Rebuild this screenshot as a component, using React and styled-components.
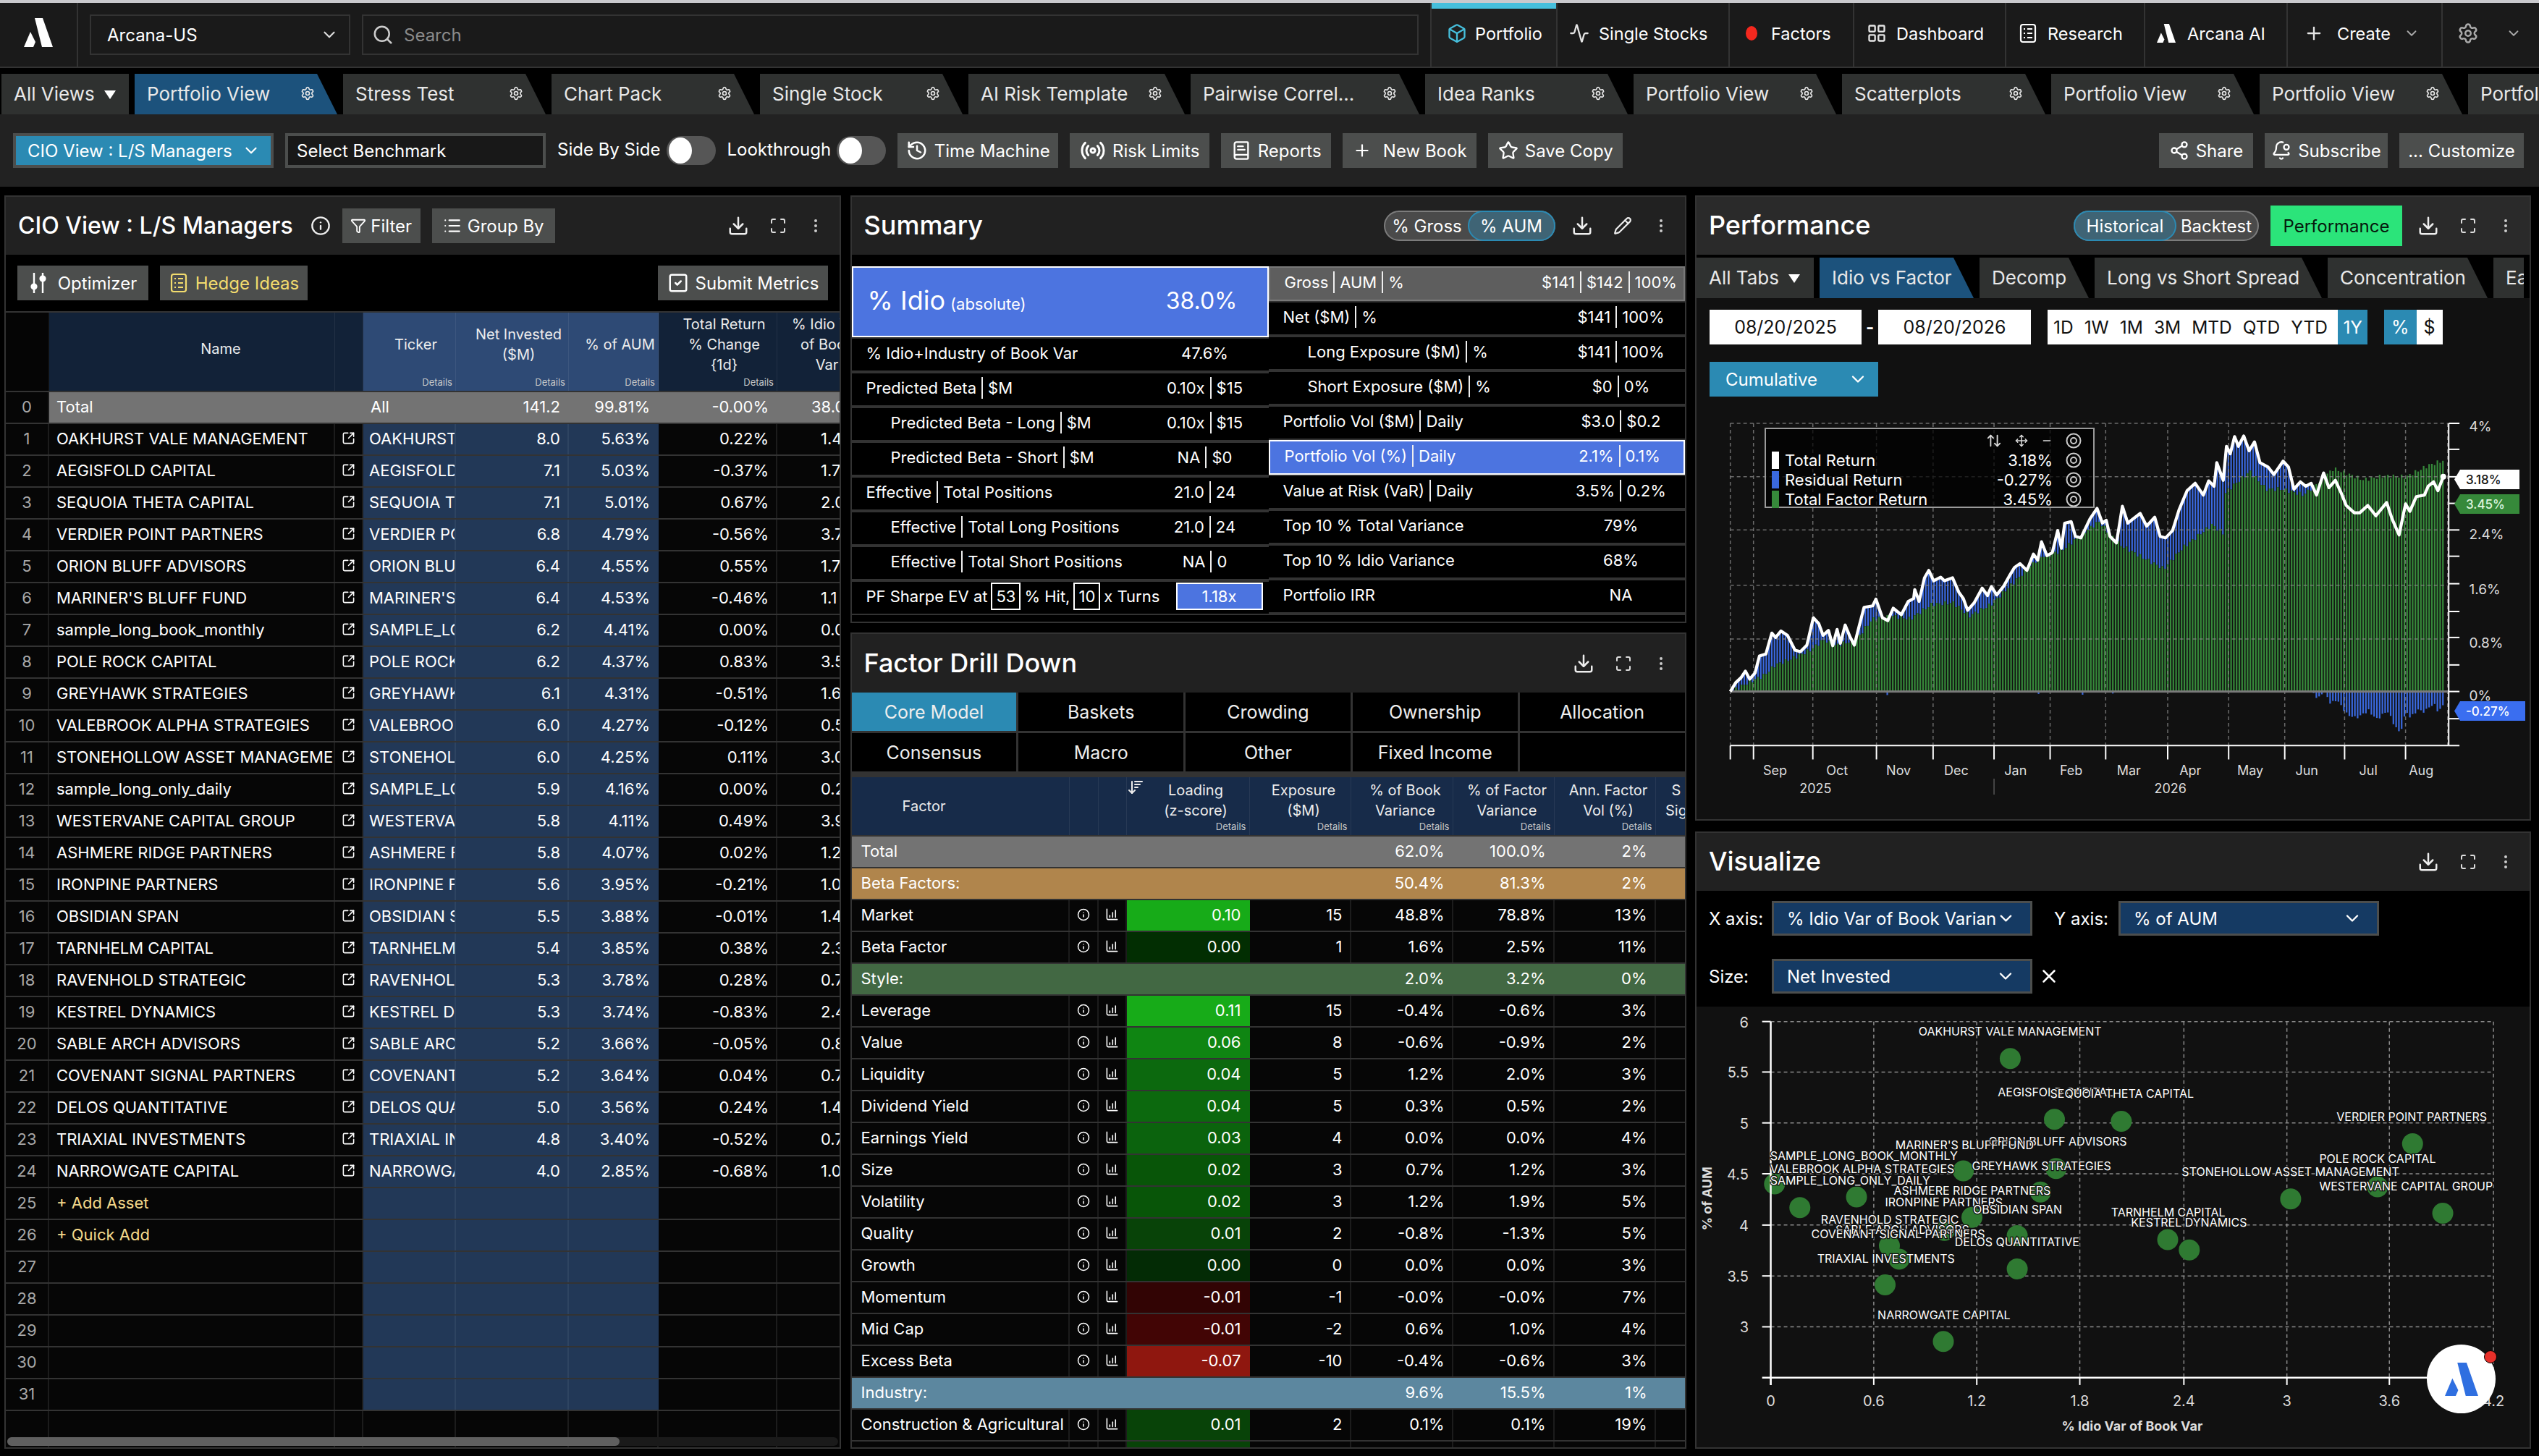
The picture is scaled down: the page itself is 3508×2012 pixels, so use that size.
import React from 'react';
import styled, { createGlobalStyle } from 'styled-components';
import {
  Activity, ArrowDownWideNarrow, ArrowUpDown, BellDot, BookText, Box, ChartColumnIncreasing, ChevronDown,
  Download, EllipsisVertical, Filter, History, Info, LayoutGrid, List, Maximize, Minus, Move,
  Pencil, Plus, Radio, Search, Settings, Share2, SquareArrowOutUpRight,
  SquareCheck, Star, X,
} from 'lucide-react';

const GlobalStyle = createGlobalStyle`
  html, body { margin: 0; padding: 0; background: #000; }
  body { width: 3508px; height: 2012px; overflow: hidden; font-family: Inter, "Noto Sans", sans-serif; color: #fff; }
  * { box-sizing: border-box; }
`;

const Page = styled.div`
  width: 3508px;
  height: 2012px;
  display: flex;
  flex-direction: column;
  background: #000;
  overflow: hidden;
`;

const TopStrip = styled.div`
  height: 4px;
  background: #c9c9cd;
`;

const TopBar = styled.div`
  height: 90px;
  display: flex;
  background: #1a1a1a;
  border-bottom: 2px solid #333;
`;

const LogoCell = styled.div`
  width: 108px;
  display: flex;
  align-items: center;
  justify-content: center;
  border-right: 2px solid #333;
  padding-bottom: 6px;
`;

const TopSelect = styled.div`
  width: 360px;
  height: 56px;
  margin: 16px 0 0 16px;
  padding: 0 14px 0 22px;
  display: flex;
  align-items: center;
  justify-content: space-between;
  border: 2px solid #333;
  font-size: 24px;
`;

const SearchBox = styled.div`
  width: 1460px;
  height: 56px;
  margin: 16px 16px 0 16px;
  padding: 0 12px;
  display: flex;
  align-items: center;
  gap: 14px;
  border: 2px solid #333;
  font-size: 24px;
  color: #8a8a8a;
`;

const NavItem = styled.div`
  width: ${(p) => p.$w}px;
  display: flex;
  align-items: center;
  gap: ${(p) => p.$gap || 13}px;
  padding: 0 0 4px ${(p) => p.$pad}px;
  font-size: 23.5px;
  border-left: 2px solid #333;
  position: relative;
  ${(p) => p.$active && 'background: #1f1f1f; &::before { content: ""; position: absolute; left: 0; right: 0; top: 0; height: 8px; background: #46bfdc; }'}
`;

const RedDot = styled.span`
  width: 16px;
  height: 20px;
  border-radius: 50%;
  background: #f5281e;
`;

const TabStrip = styled.div`
  height: ${(p) => p.$h || 64}px;
  padding: ${(p) => p.$pad || '8px 0 0 2px'};
  display: flex;
  gap: 8px;
  overflow: hidden;
  flex-shrink: 0;
  background: #000;
`;

const TabItem = styled.div`
  flex: 0 0 ${(p) => p.$w}px;
  height: 56px;
  padding: 0 ${(p) => (p.$plain ? 0 : 31)}px 2px 17px;
  display: flex;
  align-items: center;
  justify-content: ${(p) => (p.$plain ? 'flex-start' : 'space-between')};
  font-size: 26px;
  white-space: nowrap;
  overflow: hidden;
  color: #e8e8e8;
  background: ${(p) => (p.$active ? '#1c527c' : '#2f3130')};
  ${(p) => !p.$plain && 'clip-path: polygon(0 0, calc(100% - 28px) 0, 100% 100%, 0 100%);'}
`;

const Caret = styled.span`
  width: 0;
  height: 0;
  margin: 3px 0 0 13px;
  border-left: 8px solid transparent;
  border-right: 8px solid transparent;
  border-top: 12px solid #fff;
`;

const Toolbar = styled.div`
  height: 100px;
  flex-shrink: 0;
  padding: 26px 21px 0 18px;
  display: flex;
  gap: 16px;
  background: #222;
`;

const Spacer = styled.div`
  flex: 1;
`;

const ViewSelect = styled.div`
  width: 360px;
  height: 48px;
  padding: 0 14px 0 16px;
  display: flex;
  align-items: center;
  justify-content: space-between;
  font-size: 24px;
  background: #2b8ab3;
  border: 4px solid #4c4e4d;
`;

const BenchInput = styled.div`
  width: 360px;
  height: 48px;
  padding: 0 12px;
  display: flex;
  align-items: center;
  font-size: 24px;
  background: #181818;
  border: 4px solid #4c4e4d;
`;

const ToggleLabel = styled.div`
  height: 44px;
  display: flex;
  align-items: center;
  font-size: 24px;
`;

const Toggle = styled.div`
  width: 68px;
  height: 40px;
  margin: 4px 0 0 -8px;
  padding: 0 0 0 3px;
  border-radius: 20px;
  background: #565656;
  display: flex;
  align-items: center;
  &::before { content: ""; width: 32px; height: 36px; border-radius: 50%; background: #fff; }
`;

const ToolButton = styled.div`
  width: ${(p) => (p.$w ? `${p.$w}px` : 'auto')};
  height: 48px;
  display: flex;
  align-items: center;
  justify-content: center;
  gap: ${(p) => p.$gap || 9}px;
  font-size: 24px;
  white-space: nowrap;
  flex-shrink: 0;
  color: ${(p) => p.$color || '#fff'};
  background: #4c4e4d;
`;

const Columns = styled.div`
  flex: 1;
  min-height: 0;
  margin-top: 12px;
  padding: 0 11px 10px 6px;
  display: grid;
  grid-template-columns: 1156px 1155px 1155px;
  column-gap: 12.5px;
`;

const Stack = styled.div`
  display: flex;
  flex-direction: column;
  min-height: 0;
`;

const Panel = styled.section`
  display: flex;
  flex-direction: column;
  overflow: hidden;
  border: 2px solid #333;
  background: #000;
  position: relative;
  height: ${(p) => (p.$h ? `${p.$h}px` : 'auto')};
  flex: ${(p) => (p.$h ? '0 0 auto' : '1')};
  margin-top: ${(p) => p.$mt || 0}px;
`;

const PanelHead = styled.header`
  height: ${(p) => p.$h || 80}px;
  flex-shrink: 0;
  padding: 0 21px 0 17px;
  display: flex;
  align-items: center;
  gap: 16px;
  background: ${(p) => p.$bg || '#212121'};
`;

const PanelTitle = styled.h2`
  margin: 0 0 2px;
  font-size: ${(p) => p.$size || 36}px;
  font-weight: 500;
  white-space: nowrap;
`;

const IconGroup = styled.div`
  display: flex;
  align-items: center;
  gap: 28px;
  margin-left: ${(p) => p.$ml || 0}px;
`;

const Pill = styled.div`
  height: 42px;
  display: flex;
  font-size: 24px;
  border-radius: 21px;
  background: #4a4a4a;
  border: 2px solid #7c7c7c;
`;

const PillPart = styled.div`
  width: ${(p) => p.$w}px;
  margin: -2px;
  display: flex;
  align-items: center;
  justify-content: center;
  border-radius: 21px;
  z-index: ${(p) => (p.$on ? 1 : 0)};
  ${(p) => p.$on && 'background: #3f6475; border: 2px solid #2b8ab3;'}
`;

const GreenBtn = styled.div`
  width: 182px;
  height: 56px;
  display: flex;
  align-items: center;
  justify-content: center;
  font-size: 24px;
  color: #06190d;
  background: #2be47a;
`;

const BookActions = styled.div`
  height: 78px;
  flex-shrink: 0;
  padding: 15px 16px 0 16px;
  display: flex;
  gap: 16px;
`;

const Table = styled.div`
  flex: 1;
  min-height: 0;
  overflow: hidden;
  display: flex;
  flex-direction: column;
  border-top: 2px solid #333;
  position: relative;
`;

const bookCols = '60px 395px 39px 128px 156px 124px 164px 138px';
const factorCols = '301px 40px 39px 170px 140px 141px 140px 140px 48px';

const HeadRow = styled.div`
  display: grid;
  grid-template-columns: ${(p) => p.$cols};
  height: ${(p) => p.$h}px;
  flex-shrink: 0;
  border-bottom: 2px solid #333;
`;

const HeadCell = styled.div`
  position: relative;
  overflow: hidden;
  display: flex;
  align-items: center;
  justify-content: center;
  text-align: center;
  white-space: nowrap;
  padding: ${(p) => p.$pad || '0 0 20px 18px'};
  font-size: 20px;
  line-height: 28px;
  color: #ececec;
  background: ${(p) => p.$bg};
  border-right: 1.5px solid rgba(255, 255, 255, 0.07);
`;

const Details = styled.span`
  position: absolute;
  right: 4px;
  bottom: 4px;
  font-size: 13px;
  line-height: 16px;
  color: #c8c8c8;
`;

const SortIcon = styled.span`
  position: absolute;
  left: 0;
  top: 2px;
  display: flex;
`;

const Row = styled.div`
  display: grid;
  grid-template-columns: ${(p) => p.$cols};
  height: 44px;
  flex-shrink: 0;
  font-size: 22px;
  border-bottom: 2px solid #333;
  background: ${(p) => p.$bg || '#060606'};
`;

const Cell = styled.div`
  display: flex;
  align-items: center;
  justify-content: ${(p) => p.$j || 'flex-start'};
  overflow: hidden;
  white-space: nowrap;
  padding: ${(p) => p.$pad || '0 10px'};
  padding-bottom: 3px;
  color: ${(p) => p.$color || 'inherit'};
  background: ${(p) => p.$bg || 'transparent'};
  border-right: 2px solid ${(p) => p.$line || '#1c1c1c'};
`;

const BlankTail = styled.div`
  flex: 1;
  display: grid;
  grid-template-columns: ${bookCols};
  background: #060606;
`;

const TailCell = styled.div`
  border-right: 2px solid #1c1c1c;
`;

const ScrollTrack = styled.div`
  position: absolute;
  left: 2px;
  right: 2px;
  bottom: 2px;
  height: 12px;
  border-radius: 6px;
  background: #1a1a1a;
`;

const ScrollThumb = styled.div`
  width: 846px;
  height: 100%;
  border-radius: 6px;
  background: #5f5f5f;
`;

const SummaryGrid = styled.div`
  margin-top: 16px;
  display: grid;
  grid-template-columns: 576px 1fr;
  background: #333;
  flex-shrink: 0;
`;

const SummaryCol = styled.div`
  display: flex;
  flex-direction: column;
`;

const IdioBox = styled.div`
  height: 98px;
  padding: 0 41px 4px 20px;
  display: flex;
  align-items: center;
  justify-content: space-between;
  font-size: 36px;
  background: #4c74e0;
  border: 2px solid #fff;
`;

const IdioSub = styled.span`
  margin-left: 7px;
  font-size: 22px;
`;

const IdioValue = styled.span`
  font-size: 32px;
`;

const SumRow = styled.div`
  height: 48px;
  padding-left: ${(p) => (p.$indent ? 54 : 20)}px;
  padding-bottom: 4px;
  display: flex;
  align-items: center;
  font-size: 22px;
  white-space: nowrap;
  background: ${(p) => (p.$tone === 'blue' ? '#4c74e0' : p.$tone === 'grey' ? '#5e5e5e' : '#000')};
  border: ${(p) => (p.$tone === 'blue' ? '2px solid #fff' : p.$tone === 'grey' ? '2px solid #787878' : '0')};
  ${(p) => !p.$tone && 'border-top: 2px solid #333; border-bottom: 2px solid #333;'}
`;

const SumLabel = styled.div`
  flex: 1;
  display: flex;
  align-items: center;
  min-width: 0;
`;

const SumValue = styled.div`
  width: ${(p) => p.$w || 176}px;
  margin-right: ${(p) => p.$mr || 0}px;
  display: flex;
  align-items: center;
  justify-content: center;
`;

const Bar = styled.span`
  width: 2px;
  height: 30px;
  margin: 0 7px;
  background: #eee;
`;

const NumBox = styled.span`
  height: 38px;
  padding: 0 5px;
  margin: 0 5px;
  display: inline-flex;
  align-items: center;
  border: 2px solid #fff;
`;

const SharpeValue = styled.div`
  width: 120px;
  height: 38px;
  margin-right: 8px;
  display: flex;
  align-items: center;
  justify-content: center;
  background: #4c74e0;
  border: 2px solid #fff;
`;

const FactorTabs = styled.div`
  display: grid;
  grid-template-columns: repeat(5, 1fr);
  gap: 3px;
  padding-bottom: 8px;
  flex-shrink: 0;
  background: #333;
`;

const FactorTab = styled.div`
  height: 53px;
  display: flex;
  align-items: center;
  justify-content: center;
  font-size: 25px;
  color: #eee;
  background: ${(p) => (p.$active ? '#2b8ab3' : '#000')};
`;

const PerfBody = styled.div`
  flex: 1;
  min-height: 0;
  display: flex;
  flex-direction: column;
  background: #111;
  position: relative;
`;

const DateRow = styled.div`
  padding: 16px 0 0 18px;
  display: flex;
  align-items: center;
  flex-shrink: 0;
`;

const WhiteField = styled.div`
  width: ${(p) => p.$w}px;
  height: 48px;
  margin-left: ${(p) => p.$ml || 0}px;
  display: flex;
  align-items: center;
  justify-content: ${(p) => p.$j || 'center'};
  padding: ${(p) => p.$pad || 0};
  font-size: ${(p) => p.$fs || 25}px;
  color: #111;
  background: #fff;
`;

const Dash = styled.span`
  width: 23px;
  text-align: center;
  font-size: 24px;
  font-weight: 700;
`;

const RangeItem = styled.span`
  height: 48px;
  margin-left: ${(p) => p.$ml || 0}px;
  padding: 0 ${(p) => p.$pad || 0}px;
  display: flex;
  align-items: center;
  color: ${(p) => (p.$on ? '#fff' : '#111')};
  background: ${(p) => (p.$on ? '#2b8ab3' : 'transparent')};
  ${(p) => p.$last && 'margin-left: auto;'}
`;

const Cumulative = styled.div`
  width: 233px;
  height: 48px;
  margin: 24px 0 0 18px;
  padding: 0 14px 0 22px;
  flex-shrink: 0;
  display: flex;
  align-items: center;
  justify-content: space-between;
  font-size: 24px;
  background: #2b8ab3;
`;

const ChartWrap = styled.div`
  flex: 1;
  position: relative;
  min-height: 0;
`;

const Legend = styled.div`
  position: absolute;
  left: 94px;
  top: 43px;
  width: 456px;
  height: 111px;
  padding: 29px 16px 0 8px;
  background: rgba(0, 0, 0, 0.72);
  border: 2px solid #9a9a9a;
  font-size: 22px;
`;

const LegendTools = styled.div`
  position: absolute;
  top: 5px;
  right: 16px;
  display: flex;
  gap: 18px;
  align-items: center;
`;

const LegendRow = styled.div`
  height: 27px;
  display: flex;
  align-items: center;
  white-space: nowrap;
`;

const Swatch = styled.span`
  width: 10px;
  height: 24px;
  margin-right: 8px;
  background: ${(p) => p.$c};
`;

const LegendVal = styled.span`
  margin-left: auto;
  margin-right: 18px;
`;

const AxisTag = styled.div`
  position: absolute;
  left: ${(p) => p.$x}px;
  top: ${(p) => p.$y}px;
  width: ${(p) => p.$w}px;
  height: 27px;
  padding: 0 0 0 16px;
  display: flex;
  align-items: center;
  font-size: 17px;
  font-weight: 500;
  color: ${(p) => p.$fg};
  background: ${(p) => p.$bg};
  clip-path: polygon(8px 0, 100% 0, 100% 100%, 8px 100%, 0 50%);
`;

const AxisForm = styled.div`
  height: 160px;
  flex-shrink: 0;
  padding: 14px 0 0 17px;
  display: flex;
  flex-direction: column;
  gap: 32px;
`;

const AxisLine = styled.div`
  display: flex;
  align-items: center;
  font-size: 24px;
`;

const AxisLabel = styled.span`
  width: ${(p) => p.$w || 87}px;
  margin-left: ${(p) => p.$ml || 0}px;
`;

const AxisSelect = styled.div`
  width: 360px;
  height: 48px;
  padding: 0 20px 0 18px;
  display: flex;
  align-items: center;
  justify-content: space-between;
  white-space: nowrap;
  overflow: hidden;
  font-size: 24px;
  background: #153a63;
  border: 3px solid #4c4e4d;
`;

const ClearX = styled.span`
  margin-left: 8px;
  display: flex;
`;

const ScatterWrap = styled.div`
  flex: 1;
  min-height: 0;
  background: #111;
`;

const ChatBubble = styled.div`
  position: absolute;
  left: 3353px;
  top: 1858px;
  width: 95px;
  height: 95px;
  border-radius: 50%;
  background: #fff;
  display: flex;
  align-items: center;
  justify-content: center;
  &::after {
    content: "";
    position: absolute;
    right: -2px;
    top: 8px;
    width: 16px;
    height: 16px;
    border-radius: 50%;
    background: #e8302a;
    border: 1px solid #000;
  }
`;

const Logo = ({ size = 40, color = '#fff' }) => (
  <svg width={size} height={size} viewBox="0 0 40 40">
    <polygon points="15,0 26,0 40,40 25,40" fill={color} />
    <polygon points="9,19 16,33 13,40 0,40" fill={color} />
  </svg>
);

// legend eye toggle: two rings, lucide has no exact match
const Ring = () => (
  <svg width="22" height="22" viewBox="0 0 22 22" fill="none" stroke="#ccc" strokeWidth="2">
    <circle cx="11" cy="11" r="9.5" />
    <circle cx="11" cy="11" r="4" />
  </svg>
);

const TwoSliders = () => (
  <svg width="26" height="30" viewBox="0 0 26 30" fill="none" stroke="#fff" strokeWidth="2.4">
    <path d="M7 1v28M19 1v28" />
    <circle cx="7" cy="20" r="3.4" fill="#fff" />
    <circle cx="19" cy="9" r="3.4" fill="#fff" />
  </svg>
);

const ListCard = ({ color = '#fff', size = 28 }) => (
  <svg width={size} height={size} viewBox="0 0 28 28" fill="none" stroke={color} strokeWidth="2.2">
    <rect x="4" y="2" width="20" height="24" rx="3" />
    <path d="M8 8h2M13 8h7M8 14h2M13 14h7M8 20h2M13 20h7" />
  </svg>
);

const gear = <Settings size={20} color="#e8e8e8" />;

const views = [
  ['Portfolio View', 280, true], ['Stress Test', 280], ['Chart Pack', 280], ['Single Stock', 280],
  ['AI Risk Template', 299], ['Pairwise Correl...', 316], ['Idea Ranks', 280], ['Portfolio View', 280],
  ['Scatterplots', 281], ['Portfolio View', 280], ['Portfolio View', 280], ['Portfolio View', 280],
];

const book = [
  ['OAKHURST VALE MANAGEMENT', 'OAKHURST', '8.0', '5.63%', '0.22%', '1.4'],
  ['AEGISFOLD CAPITAL', 'AEGISFOLD', '7.1', '5.03%', '-0.37%', '1.7'],
  ['SEQUOIA THETA CAPITAL', 'SEQUOIA T', '7.1', '5.01%', '0.67%', '2.0'],
  ['VERDIER POINT PARTNERS', 'VERDIER PO', '6.8', '4.79%', '-0.56%', '3.7'],
  ['ORION BLUFF ADVISORS', 'ORION BLU', '6.4', '4.55%', '0.55%', '1.7'],
  ["MARINER'S BLUFF FUND", "MARINER'S", '6.4', '4.53%', '-0.46%', '1.1'],
  ['sample_long_book_monthly', 'SAMPLE_LO', '6.2', '4.41%', '0.00%', '0.0'],
  ['POLE ROCK CAPITAL', 'POLE ROCK', '6.2', '4.37%', '0.83%', '3.5'],
  ['GREYHAWK STRATEGIES', 'GREYHAWK', '6.1', '4.31%', '-0.51%', '1.6'],
  ['VALEBROOK ALPHA STRATEGIES', 'VALEBROOK', '6.0', '4.27%', '-0.12%', '0.5'],
  ['STONEHOLLOW ASSET MANAGEMENT', 'STONEHOLL', '6.0', '4.25%', '0.11%', '3.0'],
  ['sample_long_only_daily', 'SAMPLE_LO', '5.9', '4.16%', '0.00%', '0.2'],
  ['WESTERVANE CAPITAL GROUP', 'WESTERVA', '5.8', '4.11%', '0.49%', '3.9'],
  ['ASHMERE RIDGE PARTNERS', 'ASHMERE F', '5.8', '4.07%', '0.02%', '1.2'],
  ['IRONPINE PARTNERS', 'IRONPINE F', '5.6', '3.95%', '-0.21%', '1.0'],
  ['OBSIDIAN SPAN', 'OBSIDIAN S', '5.5', '3.88%', '-0.01%', '1.4'],
  ['TARNHELM CAPITAL', 'TARNHELM', '5.4', '3.85%', '0.38%', '2.3'],
  ['RAVENHOLD STRATEGIC', 'RAVENHOL', '5.3', '3.78%', '0.28%', '0.7'],
  ['KESTREL DYNAMICS', 'KESTREL D', '5.3', '3.74%', '-0.83%', '2.4'],
  ['SABLE ARCH ADVISORS', 'SABLE ARC', '5.2', '3.66%', '-0.05%', '0.8'],
  ['COVENANT SIGNAL PARTNERS', 'COVENANT', '5.2', '3.64%', '0.04%', '0.7'],
  ['DELOS QUANTITATIVE', 'DELOS QUA', '5.0', '3.56%', '0.24%', '1.4'],
  ['TRIAXIAL INVESTMENTS', 'TRIAXIAL IN', '4.8', '3.40%', '-0.52%', '0.7'],
  ['NARROWGATE CAPITAL', 'NARROWGA', '4.0', '2.85%', '-0.68%', '1.0'],
];

const factors = [
  ['g', 'Total', '62.0%', '100.0%', '2%', '#737373'],
  ['g', 'Beta Factors:', '50.4%', '81.3%', '2%', '#b0854c'],
  ['Market', '0.10', '#17ab18', '15', '48.8%', '78.8%', '13%'],
  ['Beta Factor', '0.00', '#022e02', '1', '1.6%', '2.5%', '11%'],
  ['g', 'Style:', '2.0%', '3.2%', '0%', '#426843'],
  ['Leverage', '0.11', '#17ab18', '15', '-0.4%', '-0.6%', '3%'],
  ['Value', '0.06', '#0f8512', '8', '-0.6%', '-0.9%', '2%'],
  ['Liquidity', '0.04', '#0c690e', '5', '1.2%', '2.0%', '3%'],
  ['Dividend Yield', '0.04', '#0c690e', '5', '0.3%', '0.5%', '2%'],
  ['Earnings Yield', '0.03', '#0b630d', '4', '0.0%', '0.0%', '4%'],
  ['Size', '0.02', '#085508', '3', '0.7%', '1.2%', '3%'],
  ['Volatility', '0.02', '#085508', '3', '1.2%', '1.9%', '5%'],
  ['Quality', '0.01', '#084308', '2', '-0.8%', '-1.3%', '5%'],
  ['Growth', '0.00', '#032b05', '0', '0.0%', '0.0%', '3%'],
  ['Momentum', '-0.01', '#320404', '-1', '-0.0%', '-0.0%', '7%'],
  ['Mid Cap', '-0.01', '#420505', '-2', '0.6%', '1.0%', '4%'],
  ['Excess Beta', '-0.07', '#8f170f', '-10', '-0.4%', '-0.6%', '3%'],
  ['g', 'Industry:', '9.6%', '15.5%', '1%', '#5c879f'],
  ['Construction & Agricultural', '0.01', '#084308', '2', '0.1%', '0.1%', '19%'],
  ['', '', '#084308', '', '', '', ''],
];

const S = ({ parts }) => parts.map((t, i) => (
  <React.Fragment key={i}>{i > 0 && <Bar />}{t}</React.Fragment>
));

const summaryLeft = [
  [['% Idio+Industry of Book Var'], ['47.6%']],
  [['Predicted Beta', '$M'], ['0.10x', '$15']],
  [['Predicted Beta - Long', '$M'], ['0.10x', '$15'], true],
  [['Predicted Beta - Short', '$M'], ['NA', '$0'], true],
  [['Effective', 'Total Positions'], ['21.0', '24']],
  [['Effective', 'Total Long Positions'], ['21.0', '24'], true],
  [['Effective', 'Total Short Positions'], ['NA', '0'], true],
];

const summaryRight = [
  [['Net ($M)', '%'], ['$141', '100%']],
  [['Long Exposure ($M)', '%'], ['$141', '100%'], true],
  [['Short Exposure ($M)', '%'], ['$0', '0%'], true],
  [['Portfolio Vol ($M)', 'Daily'], ['$3.0', '$0.2']],
  [['Portfolio Vol (%)', 'Daily'], ['2.1%', '0.1%'], false, 'blue'],
  [['Value at Risk (VaR)', 'Daily'], ['3.5%', '0.2%']],
  [['Top 10 % Total Variance'], ['79%']],
  [['Top 10 % Idio Variance'], ['68%']],
  [['Portfolio IRR'], ['NA']],
];

// chart coordinates below were read from a 1.342 x 2.45 zoom of the performance plot
const lineRaw = [[68,1175],[78,1145],[88,1128],[96,1106],[104,1133],[114,1112],[122,1055],[134,1048],[138,1022],[145,977],[152,992],[162,970],[174,985],[188,1035],[198,1040],[210,1018],[222,925],[232,945],[240,985],[250,968],[258,1020],[266,965],[272,1012],[281,950],[290,990],[298,1018],[306,960],[316,890],[332,885],[338,862],[350,925],[360,935],[370,893],[385,915],[398,870],[408,860],[410,830],[418,870],[428,790],[436,765],[445,800],[458,788],[465,800],[480,790],[492,840],[500,860],[508,900],[520,875],[535,825],[545,850],[552,820],[562,848],[575,818],[585,785],[595,755],[605,742],[618,765],[630,710],[638,730],[645,668],[655,715],[665,705],[675,630],[682,690],[688,605],[700,600],[708,650],[718,655],[735,590],[748,555],[758,605],[765,595],[772,650],[784,672],[795,548],[805,605],[815,590],[828,572],[840,615],[855,585],[865,650],[875,655],[888,630],[900,560],[915,495],[930,470],[945,510],[955,462],[965,480],[970,400],[982,460],[988,345],[995,370],[1003,312],[1010,345],[1020,310],[1030,360],[1040,330],[1050,400],[1065,415],[1076,440],[1093,395],[1103,415],[1113,490],[1125,465],[1135,480],[1145,470],[1155,510],[1168,435],[1178,485],[1190,460],[1200,500],[1210,545],[1225,570],[1235,570],[1250,545],[1265,580],[1285,535],[1295,590],[1308,645],[1320,540],[1328,565],[1340,515],[1355,510],[1362,480],[1372,465],[1380,495],[1390,448]];
const greenRaw = [[68,1175],[100,1145],[130,1120],[150,1085],[180,1065],[215,1035],[240,1000],[260,1020],[300,1000],[330,930],[370,920],[400,930],[440,880],[480,875],[510,920],[550,880],[590,810],[640,720],[680,700],[720,640],[750,600],[790,680],[830,720],[870,760],[905,690],[960,610],[980,640],[985,500],[1030,430],[1060,490],[1090,490],[1130,510],[1185,420],[1240,458],[1280,445],[1320,448],[1360,410],[1390,392]];

const perfOrigin = { x: 2344, y: 552 };
const px = (d) => 2340 + d / 1.342 - perfOrigin.x;
const py = (d) => 480 + d / 2.45 - perfOrigin.y;
const lerp = (pts, x) => {
  for (let i = 1; i < pts.length; i++) {
    if (x <= pts[i][0]) {
      const [x0, y0] = pts[i - 1];
      const [x1, y1] = pts[i];
      return y0 + ((y1 - y0) * (x - x0)) / (x1 - x0);
    }
  }
  return pts[pts.length - 1][1];
};

const PerfChart = () => {
  const bars = [];
  for (let d = 72; d < 1392; d += 5.1) {
    const total = lerp(lineRaw, d);
    const wiggle = Math.sin(d * 1.7) * 7;
    const green = lerp(greenRaw, d) + wiggle;
    bars.push([d, total, green]);
  }
  const yGrid = [267, 448, 628, 815, 997];
  const xGrid = [68, 111, 221, 339, 444, 557, 661, 764, 879, 992, 1096, 1207, 1320, 1398];
  const yTicks = [267, 355, 448, 538, 628, 717, 810, 904, 992, 1085, 1175, 1267, 1358];
  const yLabels = [['4%', 273], ['2.4%', 636], ['1.6%', 822], ['0.8%', 1004], ['0%', 1184]];
  const months = [['Sep', 151], ['Oct', 266], ['Nov', 380], ['Dec', 487], ['Jan', 597], ['Feb', 700], ['Mar', 807], ['Apr', 921], ['May', 1032], ['Jun', 1137], ['Jul', 1251], ['Aug', 1349]];
  const zero = py(1175);
  return (
    <svg width="1152" height="580" viewBox="0 0 1152 580">
      {bars.map(([d, total, green], i) => (
        <g key={i}>
          {total < green && <rect x={px(d)} y={py(total)} width="2.2" height={py(green) - py(total)} fill="#3a69df" />}
          {total > green && <rect x={px(d)} y={zero} width="2.2" height={((total - green) * 0.72) / 2.45} fill="#3a69df" />}
          <rect x={px(d)} y={py(green)} width="2.2" height={Math.max(zero - py(green), 0)} fill="#36893a" />
        </g>
      ))}
      {yGrid.map((y) => (
        <line key={y} x1={px(68)} x2={px(1398)} y1={py(y)} y2={py(y)} stroke="#8a8a8a" strokeOpacity="0.75" strokeWidth="1.5" strokeDasharray="5 4" />
      ))}
      {xGrid.map((x) => (
        <line key={x} x1={px(x)} x2={px(x)} y1={py(267)} y2={py(1358)} stroke="#8a8a8a" strokeOpacity="0.75" strokeWidth="1.5" strokeDasharray="5 4" />
      ))}
      <rect x={px(68)} y={zero - 1.5} width={px(1400) - px(68)} height="3" fill="#7a7a7a" />
      <polyline points={lineRaw.map(([x, y]) => `${px(x)},${py(y)}`).join(' ')} fill="none" stroke="#fff" strokeWidth="4.2" strokeLinejoin="round" />
      <circle cx={px(1390)} cy={py(448)} r="4" fill="#fff" />
      <line x1={px(68)} x2={px(1400)} y1={py(1358)} y2={py(1358)} stroke="#fff" strokeWidth="2" />
      <line x1={px(1400)} x2={px(1400)} y1={py(267)} y2={py(1358)} stroke="#fff" strokeWidth="2" />
      {yTicks.map((y) => <line key={y} x1={px(1400)} x2={px(1420)} y1={py(y)} y2={py(y)} stroke="#fff" strokeWidth="2" />)}
      {xGrid.slice(0, 13).map((x) => <line key={x} x1={px(x)} x2={px(x)} y1={py(1358)} y2={py(1405)} stroke="#fff" strokeWidth="2" />)}
      <line x1={px(557)} x2={px(557)} y1={py(1470)} y2={py(1524)} stroke="#555" strokeWidth="1.5" />
      {yLabels.map(([t, y]) => <text key={t} x={px(1438)} y={py(y) + 9} fill="#ddd" fontSize="19">{t}</text>)}
      {months.map(([t, x]) => <text key={t} x={px(x)} y={py(1452) + 2} fill="#ddd" fontSize="18" textAnchor="middle">{t}</text>)}
      <text x={px(226)} y={py(1511) + 3} fill="#ddd" fontSize="18" textAnchor="middle">2025</text>
      <text x={px(884)} y={py(1511) + 3} fill="#ddd" fontSize="18" textAnchor="middle">2026</text>
    </svg>
  );
};

const scatterOrigin = { x: 2344, y: 1390 };
const sx = (d) => 2340 + d / 1.342 - scatterOrigin.x;
const sy = (d) => 1130 + d / 1.778 - scatterOrigin.y;

const dots = [[587,590],[669,739],[793,744],[1333,799],[500,866],[672,860],[150,898],[197,956],[302,930],[643,918],[516,980],[1107,935],[1268,905],[1389,970],[600,1025],[465,1012],[879,1035],[919,1060],[363,1050],[381,1083],[600,1107],[355,1146],[463,1285]];
const dotLabels = [
  ['OAKHURST VALE MANAGEMENT', 417, 523], ['AEGISFOLD CAPITAL', 564, 672], ['SEQUOIA THETA CAPITAL', 661, 676],
  ['VERDIER POINT PARTNERS', 1192, 733], ['ORION BLUFF ADVISORS', 547, 793], ["MARINER'S BLUFF FUND", 374, 801],
  ['SAMPLE_LONG_BOOK_MONTHLY', 142, 829], ['VALEBROOK ALPHA STRATEGIES', 142, 861], ['GREYHAWK STRATEGIES', 516, 854],
  ['POLE ROCK CAPITAL', 1160, 836], ['STONEHOLLOW ASSET MANAGEMENT', 905, 868], ['SAMPLE_LONG_ONLY_DAILY', 142, 889],
  ['ASHMERE RIDGE PARTNERS', 371, 914], ['WESTERVANE CAPITAL GROUP', 1160, 904], ['IRONPINE PARTNERS', 355, 943],
  ['OBSIDIAN SPAN', 518, 960], ['TARNHELM CAPITAL', 774, 967], ['KESTREL DYNAMICS', 811, 992],
  ['SABLE ARCH ADVISORS', 263, 1010], ['RAVENHOLD STRATEGIC', 236, 985], ['COVENANT SIGNAL PARTNERS', 218, 1020],
  ['DELOS QUANTITATIVE', 484, 1041], ['TRIAXIAL INVESTMENTS', 229, 1081], ['NARROWGATE CAPITAL', 341, 1220],
];

const Scatter = () => {
  const xs = [[143, '0'], [334, '0.6'], [525, '1.2'], [716, '1.8'], [909, '2.4'], [1100, '3'], [1290, '3.6'], [1483, '4.2']];
  const ys = [[499, '6'], [623, '5.5'], [748, '5'], [873, '4.5'], [999, '4'], [1124, '3.5'], [1249, '3']];
  return (
    <svg width="1152" height="610" viewBox="0 0 1152 610">
      {ys.map(([y]) => <line key={y} x1={sx(143)} x2={sx(1483)} y1={sy(y)} y2={sy(y)} stroke="#8a8a8a" strokeWidth="1.5" strokeDasharray="5 4" />)}
      {xs.slice(1).map(([x]) => <line key={x} x1={sx(x)} x2={sx(x)} y1={sy(499)} y2={sy(1374)} stroke="#8a8a8a" strokeWidth="1.5" strokeDasharray="5 4" />)}
      {dots.map(([x, y], i) => <circle key={i} cx={sx(x)} cy={sy(y)} r="14.5" fill="#2f7a32" />)}
      <line x1={sx(143)} x2={sx(143)} y1={sy(499)} y2={sy(1392)} stroke="#fff" strokeWidth="2.5" />
      <line x1={sx(127)} x2={sx(1483)} y1={sy(1374)} y2={sy(1374)} stroke="#fff" strokeWidth="2.5" />
      {ys.map(([y]) => <line key={y} x1={sx(127)} x2={sx(143)} y1={sy(y)} y2={sy(y)} stroke="#fff" strokeWidth="2" />)}
      {xs.map(([x]) => <line key={x} x1={sx(x)} x2={sx(x)} y1={sy(1374)} y2={sy(1392)} stroke="#fff" strokeWidth="2" />)}
      {dotLabels.map(([t, x, y]) => (
        <text key={t} x={sx(x)} y={sy(y) + 6} fill="#fff" fontSize="16" stroke="#111" strokeWidth="2.5" paintOrder="stroke">{t}</text>
      ))}
      {ys.map(([y, t]) => <text key={t} x={sx(102)} y={sy(y) + 8} fill="#ddd" fontSize="20" textAnchor="end">{t}</text>)}
      {xs.map(([x, t]) => <text key={t} x={sx(x)} y={sy(1432) + 7} fill="#ddd" fontSize="20" textAnchor="middle">{t}</text>)}
      <text x={sx(813)} y={sy(1492) + 7} fill="#ddd" fontSize="18" fontWeight="700" textAnchor="middle">% Idio Var of Book Var</text>
      <text transform={`translate(${sx(26) + 6},${sy(934)}) rotate(-90)`} fill="#ddd" fontSize="18" fontWeight="700" textAnchor="middle">% of AUM</text>
    </svg>
  );
};

const HeadIcons = ({ ml, second = <Maximize size={24} color="#ddd" /> }) => (
  <IconGroup $ml={ml}>
    <Download size={30} color="#eee" />
    {second}
    <EllipsisVertical size={24} color="#ccc" />
  </IconGroup>
);

const App = () => (
  <Page>
    <GlobalStyle />
    <TopStrip />
    <TopBar>
      <LogoCell><Logo /></LogoCell>
      <TopSelect>Arcana-US <ChevronDown size={26} color="#ddd" /></TopSelect>
      <SearchBox><Search size={30} color="#ccc" /> Search</SearchBox>
      <NavItem $w={174} $pad={21} $gap={11} $active><Box size={28} color="#46bfdc" /> Portfolio</NavItem>
      <NavItem $w={238} $pad={16}><Activity size={28} color="#e5e5e5" /> Single Stocks</NavItem>
      <NavItem $w={172} $pad={22} $gap={19}><RedDot /> Factors</NavItem>
      <NavItem $w={210} $pad={17}><LayoutGrid size={28} color="#e5e5e5" /> Dashboard</NavItem>
      <NavItem $w={192} $pad={16}><ListCard /> Research</NavItem>
      <NavItem $w={197} $pad={16} $gap={16}><Logo size={26} /> Arcana AI</NavItem>
      <NavItem $w={214} $pad={22} $gap={18}><Plus size={28} color="#e5e5e5" /> Create <ChevronDown size={22} color="#aaa" /></NavItem>
      <NavItem $w={135} $pad={20} $gap={37}><Settings size={30} color="#aaa" /> <ChevronDown size={22} color="#aaa" /></NavItem>
    </TopBar>
    <TabStrip>
      <TabItem $w={176} $plain>All Views<Caret /></TabItem>
      {views.map(([name, w, on], i) => (
        <TabItem key={i} $w={w} $active={on}>{name} {gear}</TabItem>
      ))}
    </TabStrip>
    <Toolbar>
      <ViewSelect>CIO View : L/S Managers <ChevronDown size={26} /></ViewSelect>
      <BenchInput>Select Benchmark</BenchInput>
      <ToggleLabel>Side By Side</ToggleLabel>
      <Toggle />
      <ToggleLabel>Lookthrough</ToggleLabel>
      <Toggle />
      <ToolButton $w={222}><History size={30} /> Time Machine</ToolButton>
      <ToolButton $w={193}><Radio size={36} /> Risk Limits</ToolButton>
      <ToolButton $w={152}><BookText size={28} /> Reports</ToolButton>
      <ToolButton $w={185} $gap={16}><Plus size={26} /> New Book</ToolButton>
      <ToolButton $w={186}><Star size={28} /> Save Copy</ToolButton>
      <Spacer />
      <ToolButton $w={130}><Share2 size={28} /> Share</ToolButton>
      <ToolButton $w={170}><BellDot size={28} /> Subscribe</ToolButton>
      <ToolButton $w={172}>... Customize</ToolButton>
    </Toolbar>
    <Columns>
      <Panel>
        <PanelHead>
          <PanelTitle $size={32}>CIO View : L/S Managers</PanelTitle>
          <Info size={28} color="#eee" style={{ marginLeft: 8 }} />
          <ToolButton $w={108} $gap={6}><Filter size={22} /> Filter</ToolButton>
          <ToolButton $w={170} $gap={8}><List size={26} /> Group By</ToolButton>
          <Spacer />
          <HeadIcons />
        </PanelHead>
        <BookActions>
          <ToolButton $w={181} $gap={14}><TwoSliders /> Optimizer</ToolButton>
          <ToolButton $w={204} $color="#f2dc6e"><ListCard color="#f2dc6e" /> Hedge Ideas</ToolButton>
          <Spacer />
          <ToolButton $w={235}><SquareCheck size={30} /> Submit Metrics</ToolButton>
        </BookActions>
        <Table>
          <HeadRow $cols={bookCols} $h={110}>
            <HeadCell $bg="#050505" />
            <HeadCell $bg="#122238" $pad="0 0 8px 80px">Name</HeadCell>
            <HeadCell $bg="#122238" />
            <HeadCell $bg="#2e4a75">Ticker<Details>Details</Details></HeadCell>
            <HeadCell $bg="#2e4a75">Net Invested<br />($M)<Details>Details</Details></HeadCell>
            <HeadCell $bg="#2e4a75">% of AUM<Details>Details</Details></HeadCell>
            <HeadCell $bg="#122238">Total Return<br />% Change<br />{'{1d}'}<Details>Details</Details></HeadCell>
            <HeadCell $bg="#122238" $pad="0 0 20px 0">% Idio Var<br />of Book<br />Var<Details>Details</Details></HeadCell>
          </HeadRow>
          <Row $cols={bookCols}>
            <Cell $j="center" $color="#a8a8a8">0</Cell>
            <Cell $bg="#737373" $line="#737373">Total</Cell>
            <Cell $bg="#737373" $line="#737373" />
            <Cell $bg="#737373" $line="#737373">All</Cell>
            <Cell $bg="#737373" $line="#737373" $j="flex-end">141.2</Cell>
            <Cell $bg="#737373" $line="#737373" $j="flex-end">99.81%</Cell>
            <Cell $bg="#737373" $line="#737373" $j="flex-end">-0.00%</Cell>
            <Cell $bg="#737373" $line="#737373" $pad="0 0 0 47px">38.0%</Cell>
          </Row>
          {book.map((r, i) => (
            <Row key={i} $cols={bookCols}>
              <Cell $j="center" $color="#a8a8a8">{i + 1}</Cell>
              <Cell>{r[0]}</Cell>
              <Cell $j="center" $pad="0"><SquareArrowOutUpRight size={19} /></Cell>
              <Cell $bg="#223857" $line="#2e4461" $pad="0 0 0 8px">{r[1]}</Cell>
              <Cell $bg="#223857" $line="#2e4461" $j="flex-end">{r[2]}</Cell>
              <Cell $bg="#223857" $line="#223857" $j="flex-end">{r[3]}</Cell>
              <Cell $j="flex-end">{r[4]}</Cell>
              <Cell $pad="0 0 0 60px">{r[5]}</Cell>
            </Row>
          ))}
          {['+ Add Asset', '+ Quick Add', '', '', '', '', ''].map((t, i) => (
            <Row key={i} $cols={bookCols}>
              <Cell $j="center" $color="#a8a8a8">{i + 25}</Cell>
              <Cell $color="#f4d98a">{t}</Cell>
              <Cell />
              <Cell $bg="#223857" $line="#2e4461" />
              <Cell $bg="#223857" $line="#2e4461" />
              <Cell $bg="#223857" $line="#223857" />
              <Cell />
              <Cell />
            </Row>
          ))}
          <BlankTail>
            {Array.from({ length: 8 }).map((_, i) => <TailCell key={i} />)}
          </BlankTail>
          <ScrollTrack><ScrollThumb /></ScrollTrack>
        </Table>
      </Panel>

      <Stack>
        <Panel $h={591}>
          <PanelHead>
            <PanelTitle>Summary</PanelTitle>
            <Spacer />
            <Pill>
              <PillPart $w={120}>% Gross</PillPart>
              <PillPart $w={121} $on>% AUM</PillPart>
            </Pill>
            <HeadIcons ml={6} second={<Pencil size={26} color="#eee" />} />
          </PanelHead>
          <SummaryGrid>
            <SummaryCol>
              <IdioBox><span>% Idio<IdioSub>(absolute)</IdioSub></span><IdioValue>38.0%</IdioValue></IdioBox>
              {summaryLeft.map(([label, val, indent], i) => (
                <SumRow key={i} $indent={indent}>
                  <SumLabel><S parts={label} /></SumLabel>
                  <SumValue><S parts={val} /></SumValue>
                </SumRow>
              ))}
              <SumRow>
                <SumLabel>PF Sharpe EV at<NumBox>53</NumBox>% Hit,<NumBox>10</NumBox>x Turns</SumLabel>
                <SharpeValue>1.18x</SharpeValue>
              </SumRow>
            </SummaryCol>
            <SummaryCol>
              <SumRow $tone="grey">
                <SumLabel><S parts={['Gross', 'AUM', '%']} /></SumLabel>
                <SumValue $w={200} $mr={2}><S parts={['$141', '$142', '100%']} /></SumValue>
              </SumRow>
              {summaryRight.map(([label, val, indent, tone], i) => (
                <SumRow key={i} $indent={indent} $tone={tone}>
                  <SumLabel><S parts={label} /></SumLabel>
                  <SumValue><S parts={val} /></SumValue>
                </SumRow>
              ))}
            </SummaryCol>
          </SummaryGrid>
        </Panel>
        <Panel $mt={13}>
          <PanelHead $h={81}>
            <PanelTitle>Factor Drill Down</PanelTitle>
            <Spacer />
            <HeadIcons />
          </PanelHead>
          <FactorTabs>
            {['Core Model', 'Baskets', 'Crowding', 'Ownership', 'Allocation', 'Consensus', 'Macro', 'Other', 'Fixed Income', ''].map((t, i) => (
              <FactorTab key={t} $active={i === 0}>{t}</FactorTab>
            ))}
          </FactorTabs>
          <HeadRow $cols={factorCols} $h={82}>
            <HeadCell $bg="#172b49" $pad="0 100px 0 0">Factor</HeadCell>
            <HeadCell $bg="#172b49" />
            <HeadCell $bg="#172b49" />
            <HeadCell $bg="#172b49" $pad="0 0 16px 22px">
              <SortIcon><ArrowDownWideNarrow size={24} /></SortIcon>
              Loading<br />(z-score)<Details>Details</Details>
            </HeadCell>
            <HeadCell $bg="#172b49" $pad="0 0 16px 10px">Exposure<br />($M)<Details>Details</Details></HeadCell>
            <HeadCell $bg="#172b49" $pad="0 0 16px 10px">% of Book<br />Variance<Details>Details</Details></HeadCell>
            <HeadCell $bg="#172b49" $pad="0 0 16px 10px">% of Factor<br />Variance<Details>Details</Details></HeadCell>
            <HeadCell $bg="#172b49" $pad="0 0 16px 10px">Ann. Factor<br />Vol (%)<Details>Details</Details></HeadCell>
            <HeadCell $bg="#172b49" $pad="0 0 16px 10px">S<br />Sig</HeadCell>
          </HeadRow>
          {factors.map((f, i) => (f[0] === 'g' ? (
            <Row key={i} $cols={factorCols} $bg={f[5]}>
              <Cell $line={f[5]} $pad="0 0 0 13px">{f[1]}</Cell>
              <Cell $line={f[5]} />
              <Cell $line={f[5]} />
              <Cell $line={f[5]} />
              <Cell $line={f[5]} />
              <Cell $line={f[5]} $j="flex-end">{f[2]}</Cell>
              <Cell $line={f[5]} $j="flex-end">{f[3]}</Cell>
              <Cell $line={f[5]} $j="flex-end">{f[4]}</Cell>
              <Cell $line={f[5]} />
            </Row>
          ) : (
            <Row key={i} $cols={factorCols}>
              <Cell $pad="0 0 0 13px">{f[0]}</Cell>
              <Cell $j="center" $pad="0">{f[0] && <Info size={18} />}</Cell>
              <Cell $j="center" $pad="0">{f[0] && <ChartColumnIncreasing size={19} />}</Cell>
              <Cell $bg={f[2]} $line={f[2]} $j="flex-end">{f[1]}</Cell>
              <Cell $j="flex-end">{f[3]}</Cell>
              <Cell $j="flex-end">{f[4]}</Cell>
              <Cell $j="flex-end">{f[5]}</Cell>
              <Cell $j="flex-end">{f[6]}</Cell>
              <Cell />
            </Row>
          )))}
        </Panel>
      </Stack>

      <Stack>
        <Panel $h={864}>
          <PanelHead $bg="#2a2a2a">
            <PanelTitle>Performance</PanelTitle>
            <Spacer />
            <Pill>
              <PillPart $w={142} $on>Historical</PillPart>
              <PillPart $w={118}>Backtest</PillPart>
            </Pill>
            <GreenBtn>Performance</GreenBtn>
            <HeadIcons ml={5} />
          </PanelHead>
          <TabStrip $h={60} $pad="4px 0 0 0">
            <TabItem $w={162} $plain>All Tabs<Caret /></TabItem>
            <TabItem $w={213} $active>Idio vs Factor</TabItem>
            <TabItem $w={151}>Decomp</TabItem>
            <TabItem $w={314}>Long vs Short Spread</TabItem>
            <TabItem $w={221}>Concentration</TabItem>
            <TabItem $w={42} $plain>Ea</TabItem>
          </TabStrip>
          <PerfBody>
            <DateRow>
              <WhiteField $w={210}>08/20/2025</WhiteField>
              <Dash>-</Dash>
              <WhiteField $w={211}>08/20/2026</WhiteField>
              <WhiteField $w={442} $j="flex-start" $pad="0 0 0 8px" $ml={23} $fs={24.5}>
                <RangeItem>1D</RangeItem>
                <RangeItem $ml={15}>1W</RangeItem>
                <RangeItem $ml={15}>1M</RangeItem>
                <RangeItem $ml={15}>3M</RangeItem>
                <RangeItem $ml={15}>MTD</RangeItem>
                <RangeItem $ml={15}>QTD</RangeItem>
                <RangeItem $ml={15}>YTD</RangeItem>
                <RangeItem $on $last $pad={7}>1Y</RangeItem>
              </WhiteField>
              <WhiteField $w={81} $j="flex-start" $ml={23}>
                <RangeItem $on $pad={10}>%</RangeItem>
                <RangeItem $ml={10}>$</RangeItem>
              </WhiteField>
            </DateRow>
            <Cumulative>Cumulative <ChevronDown size={28} /></Cumulative>
            <ChartWrap>
              <PerfChart />
              <Legend>
                <LegendTools>
                  <ArrowUpDown size={22} color="#ddd" />
                  <Move size={18} color="#ddd" />
                  <Minus size={16} color="#ddd" />
                  <Ring />
                </LegendTools>
                <LegendRow><Swatch $c="#fff" />Total Return<LegendVal>3.18%</LegendVal><Ring /></LegendRow>
                <LegendRow><Swatch $c="#3a69df" />Residual Return<LegendVal>-0.27%</LegendVal><Ring /></LegendRow>
                <LegendRow><Swatch $c="#36893a" />Total Factor Return<LegendVal>3.45%</LegendVal><Ring /></LegendRow>
              </Legend>
              <AxisTag $x={1047} $y={101} $w={90} $bg="#fff" $fg="#111">3.18%</AxisTag>
              <AxisTag $x={1047} $y={135} $w={90} $bg="#36893a" $fg="#dff5df">3.45%</AxisTag>
              <AxisTag $x={1047} $y={421} $w={98} $bg="#3a6ef0" $fg="#fff">-0.27%</AxisTag>
            </ChartWrap>
          </PerfBody>
        </Panel>
        <Panel $mt={15}>
          <PanelHead $h={80}>
            <PanelTitle>Visualize</PanelTitle>
            <Spacer />
            <HeadIcons />
          </PanelHead>
          <AxisForm>
            <AxisLine>
              <AxisLabel>X axis:</AxisLabel>
              <AxisSelect>% Idio Var of Book Varian <ChevronDown size={28} /></AxisSelect>
              <AxisLabel $ml={30} $w={89}>Y axis:</AxisLabel>
              <AxisSelect>% of AUM <ChevronDown size={28} /></AxisSelect>
            </AxisLine>
            <AxisLine>
              <AxisLabel>Size:</AxisLabel>
              <AxisSelect>Net Invested <ChevronDown size={28} /></AxisSelect>
              <ClearX><X size={30} /></ClearX>
            </AxisLine>
          </AxisForm>
          <ScatterWrap><Scatter /></ScatterWrap>
        </Panel>
      </Stack>
    </Columns>
    <ChatBubble><Logo size={46} color="#2f6fe0" /></ChatBubble>
  </Page>
);

export default App;
